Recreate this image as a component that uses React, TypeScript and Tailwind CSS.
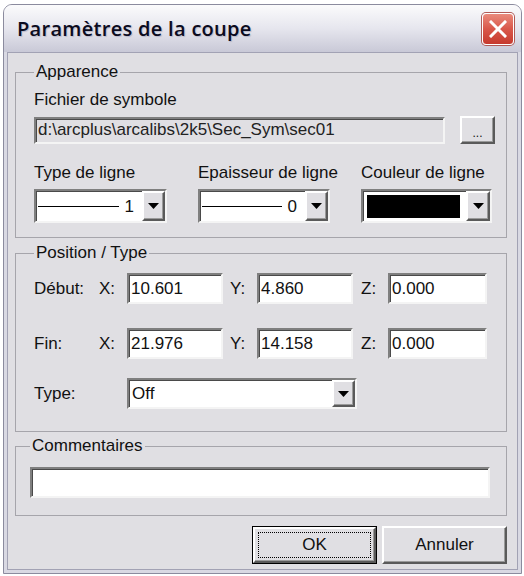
import React from "react";

const font = { fontFamily: '"Liberation Sans", Arial, sans-serif' };

const sunken =
  "border-2 border-t-[#7f7f7f] border-l-[#7f7f7f] border-b-[#f4f4f4] border-r-[#f4f4f4] shadow-[inset_1px_1px_0_#4a4a4a]";

const raised =
  "border-2 border-t-white border-l-white border-b-[#5a5a5a] border-r-[#5a5a5a] shadow-[inset_-1px_-1px_0_#9a9a9a] bg-[#e0dfe3]";

const Arrow: React.FC = () => (
  <svg width="11" height="6" viewBox="0 0 11 6">
    <path d="M0 0h11L5.5 6z" fill="#000" />
  </svg>
);

const DropButton: React.FC<{ className?: string }> = ({ className = "" }) => (
  <div className={`${raised} flex shrink-0 items-center justify-center self-stretch ${className}`}>
    <Arrow />
  </div>
);

const GroupBox: React.FC<{
  title: string;
  className?: string;
  children: React.ReactNode;
}> = ({ title, className = "", children }) => (
  <fieldset className={`border border-[#a6a5ab] ${className}`}>
    <legend className="px-[2px] text-[17px] leading-[20px] text-[#111]">{title}</legend>
    {children}
  </fieldset>
);

const LineCombo: React.FC<{ value: string; width: string }> = ({ value, width }) => (
  <div className={`${sunken} flex h-[34px] items-center bg-white ${width}`}>
    <div className="ml-[2px] h-px flex-1 bg-black" />
    <span className="ml-[6px] mr-[8px] text-[17px] leading-none">{value}</span>
    <DropButton className="w-[23px]" />
  </div>
);

const CoordField: React.FC<{ value: string; width: string }> = ({ value, width }) => (
  <div className={`${sunken} flex h-[31px] items-center bg-white pl-[2px] text-[17px] ${width}`}>
    {value}
  </div>
);

const CoordRow: React.FC<{
  label: string;
  x: string;
  y: string;
  z: string;
  className?: string;
}> = ({ label, x, y, z, className = "" }) => (
  <div className={`flex items-center text-[17px] ${className}`}>
    <span className="w-[65px]">{label}</span>
    <span className="w-[28px]">X:</span>
    <CoordField value={x} width="w-[96px]" />
    <span className="ml-[7px] w-[27px]">Y:</span>
    <CoordField value={y} width="w-[96px]" />
    <span className="ml-[8px] w-[27px]">Z:</span>
    <CoordField value={z} width="w-[99px]" />
  </div>
);

export default function App() {
  return (
    <div className="min-h-screen bg-white pl-[3px] pt-[4px]" style={font}>
      <div className="w-[519px] rounded-t-[9px] border border-[#8b8b9e] bg-[#d9d9e3] text-[#111]">
        {/* title bar */}
        <div className="flex h-[47px] items-center justify-between rounded-t-[8px] bg-gradient-to-b from-[#fbfbfc] via-[#e6e6ee] to-[#c9c9d7] pl-[13px] pr-[7px]">
          <span
            className="text-[20px] font-semibold tracking-[0.3px] text-[#0b0b1e] [text-shadow:1px_1px_1px_#b8b8c8]"
            style={{ fontFamily: '"Open Sans", "DejaVu Sans", sans-serif' }}
          >
            Paramètres de la coupe
          </span>
          <div className="flex h-[32px] w-[32px] items-center justify-center rounded-[4px] border border-white bg-gradient-to-b from-[#e98a7c] via-[#d9574a] to-[#c63a2e] shadow-[0_0_0_1px_#b05a56]">
            <svg width="18" height="18" viewBox="0 0 18 18">
              <path d="M2 2l14 14M16 2L2 16" stroke="#fff" strokeWidth="3" strokeLinecap="square" />
            </svg>
          </div>
        </div>

        {/* dialog body */}
        <div className="mx-[3px] mb-[3px] border border-[#a2a2b4] bg-[#e0dfe3] pb-[5px] pl-[7px] pr-[10px] pt-[9px]">
          <GroupBox title="Apparence" className="pb-[14px] pl-[18px] pr-[11px]">
            <div className="mt-[8px] text-[17px] leading-[20px]">Fichier de symbole</div>
            <div className="mt-[6px] flex items-center gap-[15px]">
              <div className={`${sunken} flex h-[27px] w-[411px] items-center bg-[#e0dfe3] pl-[2px] text-[17px] text-[#222]`}>
                d:\arcplus\arcalibs\2k5\Sec_Sym\sec01
              </div>
              <div className={`${raised} flex h-[28px] w-[35px] items-end justify-center pb-[3px] text-[12px] leading-none`}>
                ...
              </div>
            </div>
            <div className="mt-[19px] flex gap-[31px] text-[17px] leading-[20px]">
              <span className="w-[133px]">Type de ligne</span>
              <span className="w-[132px] whitespace-nowrap">Epaisseur de ligne</span>
              <span className="w-[131px] whitespace-nowrap">Couleur de ligne</span>
            </div>
            <div className="mt-[6px] flex gap-[31px]">
              <LineCombo value="1" width="w-[133px]" />
              <LineCombo value="0" width="w-[132px]" />
              <div className={`${sunken} flex h-[34px] w-[131px] items-center bg-white`}>
                <div className="ml-[4px] h-[23px] flex-1 bg-black" />
                <DropButton className="ml-[6px] w-[24px]" />
              </div>
            </div>
          </GroupBox>

          <GroupBox title="Position / Type" className="mt-[5px] pb-[22px] pl-[18px]">
            <CoordRow label="Début:" x="10.601" y="4.860" z="0.000" className="mt-[10px]" />
            <CoordRow label="Fin:" x="21.976" y="14.158" z="0.000" className="mt-[24px]" />
            <div className="mt-[19px] flex items-center text-[17px]">
              <span className="w-[93px]">Type:</span>
              <div className={`${sunken} flex h-[31px] w-[230px] items-center bg-white pl-[3px]`}>
                <span className="flex-1">Off</span>
                <DropButton className="w-[23px]" />
              </div>
            </div>
          </GroupBox>

          <GroupBox title="Commentaires" className="mt-[4px] pb-[17px] pl-[14px]">
            <div className={`${sunken} mt-[11px] h-[31px] w-[460px] bg-white`} />
          </GroupBox>

          <div className="mt-[10px] flex justify-end gap-[5px] text-[17px]">
            <div className="flex h-[38px] w-[125px] border border-black">
              <div className={`${raised} flex flex-1 p-[3px]`}>
                <div className="flex flex-1 items-center justify-center border border-dotted border-black">
                  OK
                </div>
              </div>
            </div>
            <div className={`${raised} flex h-[38px] w-[125px] items-center justify-center`}>
              Annuler
            </div>
          </div>
        </div>
      </div>
    </div>
  );
}
